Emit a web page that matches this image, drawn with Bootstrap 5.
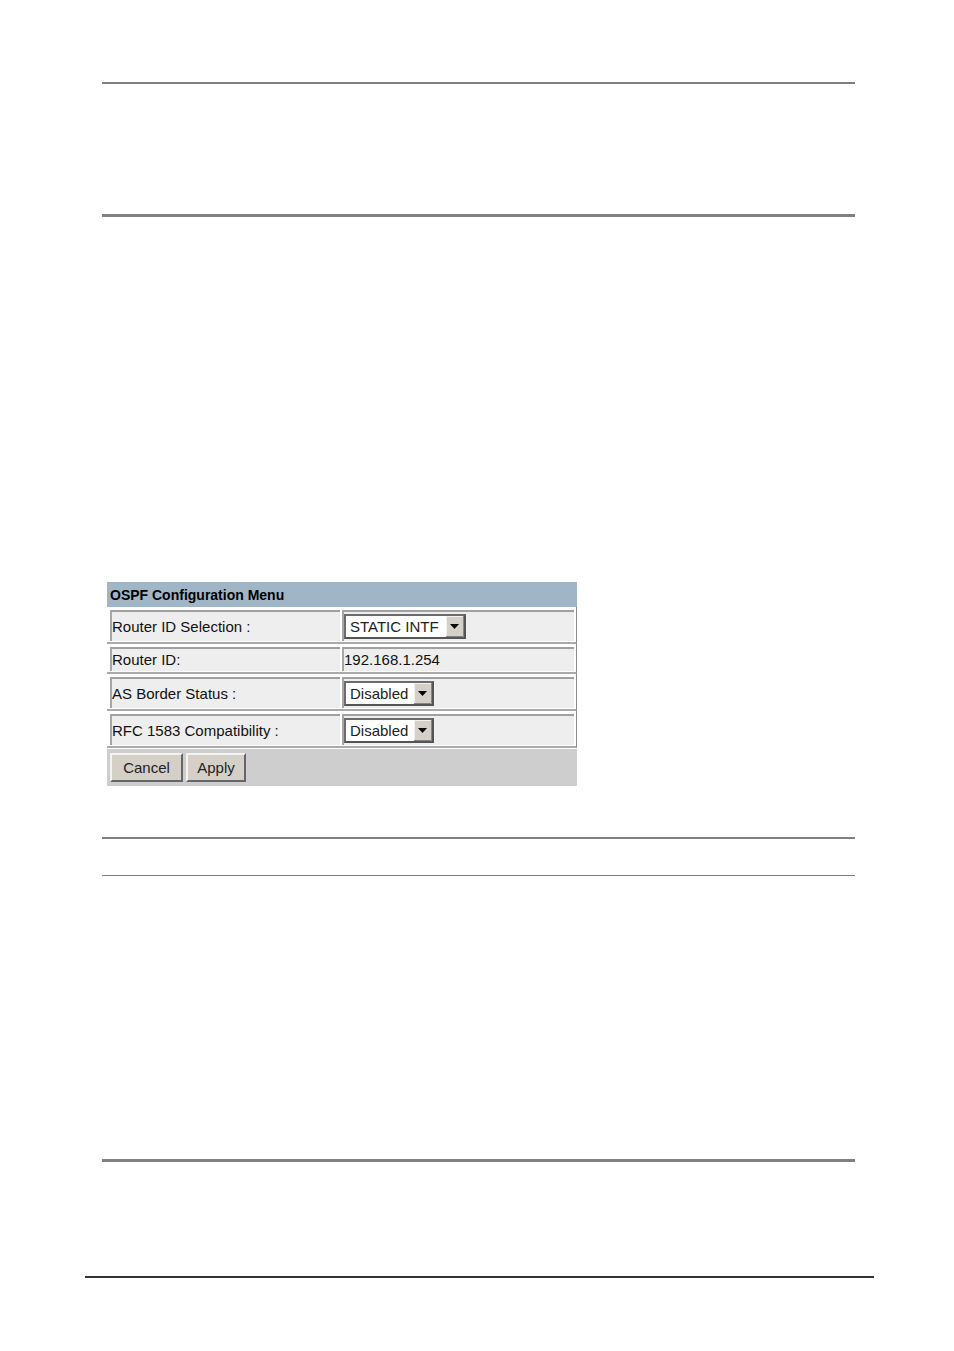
<!DOCTYPE html>
<html lang="en">
<head>
<meta charset="utf-8">
<meta name="viewport" content="width=device-width, initial-scale=1">
<title>OSPF Configuration Menu</title>
<link href="https://cdn.jsdelivr.net/npm/bootstrap@5.3.0/dist/css/bootstrap.min.css" rel="stylesheet">
<style>
  body { font-family: "Liberation Sans", Arial, sans-serif; font-size: 15px; line-height: 18px; color: #111; background: #fff; }
  .sheet { padding: 82px 80px 73px 85px; }
  .sheet-body { padding: 0 19px 0 17px; }
  .rule { margin: 0; border: 0; opacity: 1; background: #808080; height: 2px; }
  .rule-thin { height: 1px; }
  .rule-thick { height: 3px; }
  .rule-foot { background: #333; }
  .intro { height: 130px; }
  .menu-area { padding: 365px 0 51px 5px; }
  .heading-gap { height: 36px; }
  .details { height: 283px; }
  .foot-gap { height: 114px; }

  .config { width: 100%; max-width: 470px; }
  .config table { width: 100%; table-layout: fixed; border-collapse: separate; border-spacing: 0; }
  .config caption { caption-side: top; padding: 0 3px; height: 25px; line-height: 26px; background: #a0b6c7; color: #000; font-size: 14px; font-weight: bold; }
  .config th, .config td { padding: 3px 0 1px 3px; border-bottom: 2px solid #aaa; font-weight: normal; }
  .config th { width: 233px; }
  .config td { border-right: 1px solid #8c8c8c; padding-left: 2px; padding-right: 2px; }
  .cell-box { height: 31px; background: #eee; border-top: 2px solid #a0a0a0; border-left: 2px solid #a6a6a6; }
  .cell-box.slim { height: 24px; }

  .classic-select { appearance: none; height: 25px; width: 90px; padding: 0 22px 0 4px; border: 2px solid; border-color: #6c6c6c #555 #555 #6c6c6c; border-radius: 0; color: #222; line-height: 20px;
    background: #fff url("data:image/svg+xml,%3Csvg xmlns='http://www.w3.org/2000/svg' width='18' height='21'%3E%3Cpath fill='%23d4d0c8' d='M0 0h18v21H0z'/%3E%3Cpath fill='none' stroke='%23f4f2ee' d='M.5 20V.5H17'/%3E%3Cpath fill='none' stroke='%23858585' d='M0 20.5h17.500V0'/%3E%3Cpath d='M4 8h9l-4.500 5z'/%3E%3C/svg%3E") right center no-repeat; }
  .classic-select.wide { width: 122px; }

  .actions { margin-top: 1px; padding: 4px 3px; gap: 3px; background: #cecece; }
  .classic-btn { width: 73px; height: 29px; padding: 0; background: #d4d0c8; color: #222; border: 2px solid; border-color: #f5f3ef #666 #666 #f5f3ef; line-height: 20px; }
  .classic-btn.short { width: 60px; }
</style>
</head>
<body>
<main class="sheet">
  <div class="sheet-body">
    <hr class="rule">
    <div class="intro"></div>
    <hr class="rule rule-thick">
    <div class="menu-area">
      <form class="config">
        <table>
          <caption>OSPF Configuration Menu</caption>
          <tbody>
            <tr>
              <th scope="row"><div class="cell-box d-flex align-items-center"><label for="idSelection">Router ID Selection :</label></div></th>
              <td><div class="cell-box d-flex align-items-center"><select id="idSelection" class="classic-select wide"><option>STATIC INTF</option></select></div></td>
            </tr>
            <tr>
              <th scope="row"><div class="cell-box slim d-flex align-items-center">Router ID:</div></th>
              <td><div class="cell-box slim d-flex align-items-center">192.168.1.254</div></td>
            </tr>
            <tr>
              <th scope="row"><div class="cell-box d-flex align-items-center"><label for="borderStatus">AS Border Status :</label></div></th>
              <td><div class="cell-box d-flex align-items-center"><select id="borderStatus" class="classic-select"><option>Disabled</option><option>Enabled</option></select></div></td>
            </tr>
            <tr>
              <th scope="row"><div class="cell-box d-flex align-items-center"><label for="rfcCompat">RFC 1583 Compatibility :</label></div></th>
              <td><div class="cell-box d-flex align-items-center"><select id="rfcCompat" class="classic-select"><option>Disabled</option><option>Enabled</option></select></div></td>
            </tr>
          </tbody>
        </table>
        <div class="actions d-flex">
          <button type="reset" class="classic-btn">Cancel</button>
          <button type="submit" class="classic-btn short">Apply</button>
        </div>
      </form>
    </div>
    <hr class="rule">
    <div class="heading-gap"></div>
    <hr class="rule rule-thin">
    <div class="details"></div>
    <hr class="rule rule-thick">
    <div class="foot-gap"></div>
  </div>
  <hr class="rule rule-foot">
</main>
<script src="https://cdn.jsdelivr.net/npm/bootstrap@5.3.0/dist/js/bootstrap.bundle.min.js"></script>
</body>
</html>
